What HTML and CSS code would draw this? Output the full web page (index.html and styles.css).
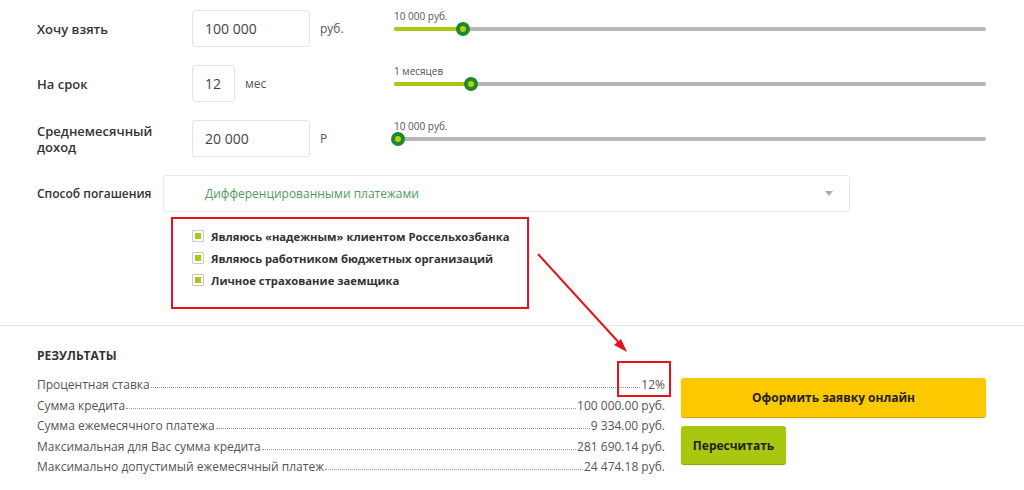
FILE: index.html
```html
<!DOCTYPE html>
<html lang="ru">
<head>
<meta charset="utf-8">
<link rel="stylesheet" href="styles.css">
</head>
<body>
<div class="page">
  <div class="form">
    <div class="row">
      <div class="label">Хочу взять</div>
      <div class="field"><div class="input wide">100 000</div><span class="unit">руб.</span></div>
      <div class="slider">
        <div class="slider-label">10 000 руб.</div>
        <div class="track"><div class="fill" style="width:69px"></div><div class="thumb" style="left:69px"></div></div>
      </div>
    </div>
    <div class="row">
      <div class="label">На срок</div>
      <div class="field"><div class="input narrow">12</div><span class="unit">мес</span></div>
      <div class="slider">
        <div class="slider-label">1 месяцев</div>
        <div class="track"><div class="fill" style="width:77px"></div><div class="thumb" style="left:77px"></div></div>
      </div>
    </div>
    <div class="row">
      <div class="label two">Среднемесячный<br>доход</div>
      <div class="field"><div class="input wide">20 000</div><span class="unit">Р</span></div>
      <div class="slider">
        <div class="slider-label">10 000 руб.</div>
        <div class="track"><div class="fill" style="width:4px"></div><div class="thumb" style="left:4px"></div></div>
      </div>
    </div>
    <div class="select-row">
      <div class="label small">Способ погашения</div>
      <div class="select"><span>Дифференцированными платежами</span><span class="caret"></span></div>
    </div>
    <div class="checks">
      <div class="check"><span class="box"></span>Являюсь «надежным» клиентом Россельхозбанка</div>
      <div class="check"><span class="box"></span>Являюсь работником бюджетных организаций</div>
      <div class="check"><span class="box"></span>Личное страхование заемщика</div>
    </div>
  </div>
  <div class="sep"></div>
  <div class="results">
    <div class="res-title">РЕЗУЛЬТАТЫ</div>
    <div class="res-grid">
      <div class="res-list">
        <div class="res-row"><span>Процентная ставка</span><span class="dots"></span><span>12%</span></div>
        <div class="res-row"><span>Сумма кредита</span><span class="dots"></span><span>100 000.00 руб.</span></div>
        <div class="res-row"><span>Сумма ежемесячного платежа</span><span class="dots"></span><span>9 334.00 руб.</span></div>
        <div class="res-row"><span>Максимальная для Вас сумма кредита</span><span class="dots"></span><span>281 690.14 руб.</span></div>
        <div class="res-row"><span>Максимально допустимый ежемесячный платеж</span><span class="dots"></span><span>24 474.18 руб.</span></div>
        <div class="mark"></div>
      </div>
      <div class="buttons">
        <div class="btn yellow">Оформить заявку онлайн</div>
        <div class="btn green">Пересчитать</div>
      </div>
    </div>
  </div>
  <svg class="arrow" width="1024" height="490" viewBox="0 0 1024 490">
    <line x1="538" y1="254" x2="622" y2="346" stroke="#e3131b" stroke-width="2"/>
    <polygon points="627,352 614,345 621,339" fill="#e3131b"/>
  </svg>
</div>
</body>
</html>
```
FILE: styles.css
```css
* { box-sizing: border-box; }
html, body { margin: 0; padding: 0; background: #fff; }
body { font-family: "Open Sans", "Noto Sans", sans-serif; color: #333; }
.page { position: relative; width: 1024px; height: 490px; overflow: hidden; }
.form { padding: 10px 38px 0 37px; }
.row {
  display: grid;
  grid-template-columns: 155px 202px 1fr;
  align-items: center;
  height: 37px;
  margin-bottom: 18px;
}
.label { font-size: 13px; font-weight: 600; color: #333; }
.label.two { line-height: 16px; }
.label.small { font-size: 12px; }
.field { display: flex; align-items: center; }
.input {
  height: 37px;
  border: 1px solid #e4e4e4;
  border-radius: 3px;
  font-size: 14px;
  color: #444;
  display: flex;
  align-items: center;
  padding-left: 12px;
}
.input.wide { width: 118px; }
.input.narrow { width: 43px; }
.unit { font-size: 12px; color: #555; margin-left: 10px; }
.slider { align-self: start; }
.slider-label { font-size: 10px; line-height: 12px; color: #555; height: 12px; }
.track {
  position: relative;
  height: 14px;
}
.track::before {
  content: "";
  position: absolute;
  left: 0; right: 0; top: 5px;
  height: 4px;
  background: #b7b7b7;
  border-radius: 2px;
}
.fill {
  position: absolute;
  left: 0; top: 5px;
  height: 4px;
  background: #a9c812;
  border-radius: 2px;
}
.thumb {
  position: absolute;
  top: 0;
  width: 14px;
  height: 14px;
  margin-left: -7px;
  border-radius: 50%;
  background: #b5d20e;
  border: 4px solid #1f872c;
}
.select-row {
  display: grid;
  grid-template-columns: 126px 687px;
  align-items: center;
  height: 37px;
}
.select {
  height: 37px;
  border: 1px solid #e8e8e8;
  border-radius: 3px;
  display: flex;
  align-items: center;
  justify-content: space-between;
  padding: 0 16px 0 41px;
  font-size: 12px;
  color: #4f9c5c;
}
.caret {
  width: 0; height: 0;
  border-left: 4px solid transparent;
  border-right: 4px solid transparent;
  border-top: 5px solid #aaa;
}
.checks {
  margin: 5px 0 0 134px;
  width: 358px;
  height: 92px;
  border: 2px solid #e3131b;
  padding: 6px 0 0 19px;
}
.check {
  display: flex;
  align-items: center;
  height: 22px;
  font-size: 11.25px;
  font-weight: 700;
  color: #333;
}
.box {
  width: 12px; height: 12px;
  border: 1px solid #c9c9c9;
  border-radius: 1px;
  margin-right: 7px;
  display: flex;
  align-items: center;
  justify-content: center;
}
.box::after {
  content: "";
  width: 6px; height: 6px;
  background: #a9c812;
}
.sep { height: 1px; background: #e6e6e6; margin-top: 16px; }
.results { padding: 23px 38px 0 37px; }
.res-title { font-size: 12px; font-weight: 700; color: #333; line-height: 14px; }
.res-grid {
  display: grid;
  grid-template-columns: 628px 1fr;
  column-gap: 16px;
  margin-top: 12px;
}
.res-list { position: relative; }
.res-row {
  display: flex;
  align-items: baseline;
  font-size: 12px;
  line-height: 20.5px;
  color: #555;
}
.dots {
  flex: 1;
  border-bottom: 1px dotted #9a9a9a;
  margin: 0 1px;
  transform: translateY(-1px);
}
.mark {
  position: absolute;
  left: 580px;
  top: -14px;
  width: 54px;
  height: 36px;
  border: 2px solid #e3131b;
}
.buttons { display: flex; flex-direction: column; align-items: flex-start; gap: 9px; padding-top: 3px; }
.btn {
  display: flex;
  align-items: center;
  justify-content: center;
  font-size: 12px;
  font-weight: 700;
  color: #222;
  border-radius: 3px;
}
.btn.yellow { width: 305px; height: 39px; background: #fcc800; box-shadow: 0 1px 1px #c9a000; }
.btn.green { width: 105px; height: 38px; background: #a8c70f; box-shadow: 0 1px 1px #7f9a08; }
.arrow { position: absolute; left: 0; top: 0; pointer-events: none; }
```
